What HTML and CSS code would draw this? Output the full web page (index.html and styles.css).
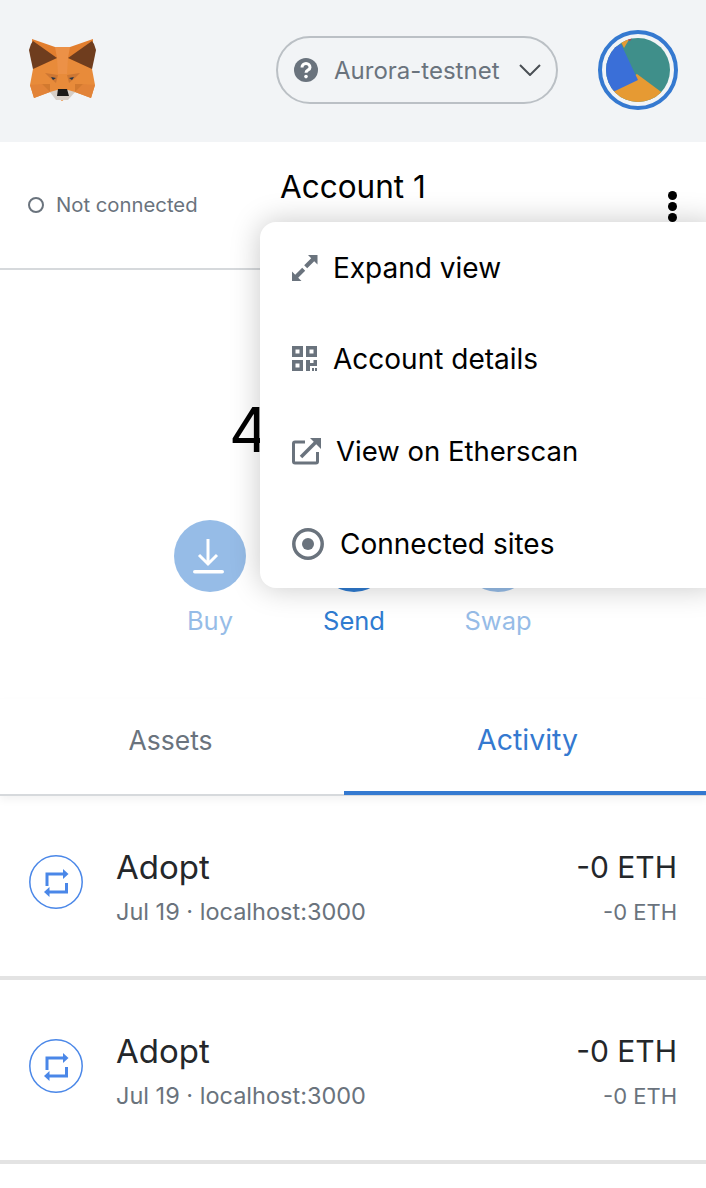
FILE: index.html
```html
<!DOCTYPE html>
<html lang="en">
<head>
<meta charset="utf-8">
<title>MetaMask</title>
<link rel="stylesheet" href="styles.css">
</head>
<body>
<div class="app">
  <header class="topbar">
    <svg class="fox" viewBox="29 39 68 63" aria-hidden="true">
      <polygon fill="#e88b3a" points="33,69 30,85 34,98 50,92 62,101 75,92 91,98 95,85 92,69 70,47 55,47"/>
      <polygon fill="#e27e2e" points="32,39 55,47 70,47 93,39 92,69 68,58 63,64 57,58 33,69"/>
      <polygon fill="#ec9147" points="55,47 70,47 68,58 67,74 58,74 57,58"/>
      <polygon fill="#6f3d1e" points="33,41 57,58 33,69 31,60 29,50 31,44"/>
      <polygon fill="#6f3d1e" points="92,41 68,58 92,69 94,60 96,50 94,44"/>
      <polygon fill="#cd7733" points="45,73 58,75 56,83 50,78"/>
      <polygon fill="#cd7733" points="80,73 67,75 69,83 75,78"/>
      <polygon fill="#e28338" points="30,85 42,84 50,92 34,98"/>
      <polygon fill="#e28338" points="95,85 83,84 75,92 91,98"/>
      <polygon fill="#d2792f" points="42,84 50,84 50,92"/>
      <polygon fill="#d2792f" points="83,84 75,84 75,92"/>
      <polygon fill="#d7cfc7" points="50,92 57,90 68,90 75,92 68,100 56,100"/>
      <polygon fill="#1b1a18" points="58,89 67,89 69,96 57,96"/>
      <polygon fill="#233447" points="51,77 56,78 53,80"/>
      <polygon fill="#233447" points="74,77 69,78 72,80"/>
    </svg>
    <button class="network">
      <svg class="network-q" viewBox="0 0 24 24" aria-hidden="true">
        <circle cx="12" cy="12" r="12" fill="#6a737d"/>
        <path d="M8 9.500a4 4 0 0 1 8 0c0 2.600-4 2.600-4 5.200" fill="none" stroke="#fff" stroke-width="3"/>
        <circle cx="12" cy="18.600" r="1.800" fill="#fff"/>
      </svg>
      <span class="network-name">Aurora-testnet</span>
      <svg class="network-chev" viewBox="0 0 22 12" aria-hidden="true">
        <path d="M1 1l10 10L21 1" fill="none" stroke="#4a4f55" stroke-width="2"/>
      </svg>
    </button>
    <div class="avatar-ring">
      <svg class="avatar" viewBox="606 38 64 64" aria-hidden="true">
        <rect x="606" y="38" width="64" height="64" fill="#3f8f8a"/>
        <polygon fill="#e69a33" points="637,74 664,94 664,104 610,104 612,88"/>
        <polygon fill="#3a6fd8" points="621,44 638,80 615,91 600,95 600,55"/>
        <polygon fill="#e69a33" points="621,42 630,38 624,48"/>
        <polygon fill="#c2334d" points="626,39 632,38 630,41"/>
      </svg>
    </div>
  </header>

  <section class="account-row">
    <div class="status">
      <span class="status-dot"></span>
      <span class="status-text">Not connected</span>
    </div>
    <div class="account-name">Account 1</div>
    <div class="kebab"><i></i><i></i><i></i></div>
  </section>

  <section class="balance">
    <div class="balance-value">4</div>
    <div class="actions">
      <div class="action action-faded">
        <span class="action-circle">
          <svg class="action-icon" viewBox="0 0 32 36" aria-hidden="true">
            <path d="M15 1v24M6 17l9 9 9-9" fill="none" stroke="#fff" stroke-width="3"/>
            <rect x="0" y="32" width="31" height="3.500" rx="1.750" fill="#fff"/>
          </svg>
        </span>
        <span class="action-label">Buy</span>
      </div>
      <div class="action">
        <span class="action-circle"></span>
        <span class="action-label">Send</span>
      </div>
      <div class="action action-faded">
        <span class="action-circle"></span>
        <span class="action-label">Swap</span>
      </div>
    </div>
  </section>

  <nav class="tabs">
    <div class="tab">Assets</div>
    <div class="tab tab-active">Activity</div>
  </nav>

  <ul class="activity">
    <li class="tx">
      <svg class="tx-icon" viewBox="0 0 54 54" aria-hidden="true">
        <circle cx="27" cy="27" r="26.200" fill="none" stroke="#4a87e8" stroke-width="1.500"/>
        <path d="M18 31V19H35" fill="none" stroke="#4a87e8" stroke-width="3"/>
        <path d="M34 14l5.500 5-5.500 5z" fill="#4a87e8"/>
        <path d="M37.500 28v9H20" fill="none" stroke="#4a87e8" stroke-width="3"/>
        <path d="M20.500 32L15 37l5.500 5z" fill="#4a87e8"/>
      </svg>
      <div class="tx-main">
        <div class="tx-title">Adopt</div>
        <div class="tx-sub">Jul 19 · localhost:3000</div>
      </div>
      <div class="tx-amounts">
        <div class="tx-primary">-0 ETH</div>
        <div class="tx-secondary">-0 ETH</div>
      </div>
    </li>
    <li class="tx">
      <svg class="tx-icon" viewBox="0 0 54 54" aria-hidden="true">
        <circle cx="27" cy="27" r="26.200" fill="none" stroke="#4a87e8" stroke-width="1.500"/>
        <path d="M18 31V19H35" fill="none" stroke="#4a87e8" stroke-width="3"/>
        <path d="M34 14l5.500 5-5.500 5z" fill="#4a87e8"/>
        <path d="M37.500 28v9H20" fill="none" stroke="#4a87e8" stroke-width="3"/>
        <path d="M20.500 32L15 37l5.500 5z" fill="#4a87e8"/>
      </svg>
      <div class="tx-main">
        <div class="tx-title">Adopt</div>
        <div class="tx-sub">Jul 19 · localhost:3000</div>
      </div>
      <div class="tx-amounts">
        <div class="tx-primary">-0 ETH</div>
        <div class="tx-secondary">-0 ETH</div>
      </div>
    </li>
  </ul>

  <div class="menu">
    <div class="menu-item">
      <svg class="menu-icon" viewBox="0 0 26 26" aria-hidden="true">
        <path fill="#6a737d" d="M16 0h9.500v9.500l-3.300-3.300-7 7-3-3 7-7zM0 16.500V26h9.500l-3.300-3.300 7-7-3-3-7 7z"/>
      </svg>
      <span class="menu-label">Expand view</span>
    </div>
    <div class="menu-item">
      <svg class="menu-icon" viewBox="0 0 26 26" aria-hidden="true">
        <path fill="#6a737d" fill-rule="evenodd" d="M0 0h11v11H0zM3.500 3.500v4h4v-4zM14 0h11v11H14zM17.500 3.500v4h4v-4zM0 14h11v11H0zM3.500 17.500v4h4v-4zM14 14h4v3h3.500v-3H25v6h-7v5h-4zM20 22h2v3h-2zM23 22h2v3h-2z"/>
      </svg>
      <span class="menu-label">Account details</span>
    </div>
    <div class="menu-item">
      <svg class="menu-icon menu-icon-wide" viewBox="0 0 30 28" aria-hidden="true">
        <path d="M13 5H3a1.500 1.500 0 0 0-1.500 1.500v18A1.500 1.500 0 0 0 3 26h21a1.500 1.500 0 0 0 1.500-1.500V15" fill="none" stroke="#6a737d" stroke-width="3"/>
        <path d="M9 20L25 4" fill="none" stroke="#6a737d" stroke-width="3.500"/>
        <path d="M18 1h11v11z" fill="#6a737d"/>
      </svg>
      <span class="menu-label menu-label-tight">View on Etherscan</span>
    </div>
    <div class="menu-item menu-item-last">
      <svg class="menu-icon menu-icon-ring" viewBox="0 0 32 32" aria-hidden="true">
        <circle cx="16" cy="16" r="14.200" fill="none" stroke="#6a737d" stroke-width="3.500"/>
        <circle cx="16" cy="16" r="6" fill="#6a737d"/>
      </svg>
      <span class="menu-label">Connected sites</span>
    </div>
  </div>
</div>
</body>
</html>
```

FILE: styles.css
```css
* { box-sizing: border-box; }
html, body { margin: 0; padding: 0; background: #fff; }
body { font-family: "Inter", "Liberation Sans", sans-serif; }
.app { position: relative; width: 706px; height: 1188px; overflow: hidden; background: #fff; }

.topbar { height: 142px; background: #f2f4f6; display: flex; align-items: center; padding: 0 28px 2px 29px; }
.fox { width: 68px; height: 63px; display: block; }
.network { margin-left: 179px; width: 282px; height: 68px; border: 2px solid #bbc0c5; border-radius: 34px; background: transparent; display: flex; align-items: center; padding: 0 15px 0 16px; font: inherit; }
.network-q { width: 24px; height: 24px; flex: none; }
.network-name { margin-left: 16px; font-size: 24px; color: #6a737d; white-space: nowrap; flex: 1; text-align: left; }
.network-chev { width: 22px; height: 12px; flex: none; }
.avatar-ring { margin-left: auto; width: 80px; height: 80px; border: 4px solid #3579d0; border-radius: 50%; padding: 4px; }
.avatar { width: 64px; height: 64px; display: block; border-radius: 50%; }

.account-row { position: relative; height: 128px; border-bottom: 2px solid #d6d9dc; }
.status { position: absolute; left: 28px; top: 50px; display: flex; align-items: center; gap: 12px; }
.status-dot { width: 16px; height: 16px; border: 2px solid #6a737d; border-radius: 50%; }
.status-text { font-size: 20.300px; color: #6a737d; line-height: 26px; }
.account-name { position: absolute; left: 280px; top: 24px; font-size: 31.500px; line-height: 42px; color: #000; }
.kebab { position: absolute; left: 668px; top: 49px; display: flex; flex-direction: column; gap: 2px; }
.kebab i { display: block; width: 9px; height: 9px; border-radius: 50%; background: #000; }

.balance { height: 429px; position: relative; }
.balance-value { position: absolute; left: 229px; top: 124px; font-size: 62px; line-height: 72px; color: #000; }
.actions { position: absolute; left: 138px; top: 250px; display: flex; }
.action { width: 144px; display: flex; flex-direction: column; align-items: center; gap: 12px; color: #2f7bd0; }
.action-faded { opacity: .5; }
.action-circle { width: 72px; height: 72px; border-radius: 50%; background: #2f7bd0; display: flex; align-items: center; justify-content: center; }
.action-icon { width: 32px; height: 36px; margin-left: -3px; }
.action-label { font-size: 25.500px; line-height: 34px; }

.tabs { position: absolute; left: 0; top: 699px; width: 706px; height: 97px; display: flex; border-bottom: 2px solid #d6d9dc; box-shadow: 0 4px 8px rgba(0,0,0,.05); background: #fff; }
.tab { flex: 1; display: flex; justify-content: center; padding-top: 22px; font-size: 26.500px; line-height: 38px; color: #6a737d; }
.tab:first-child { flex: 0 0 344px; padding-right: 3px; }
.tab-active { font-size: 28.500px; color: #3479d0; border-bottom: 4px solid #3479d0; margin-bottom: -1px; padding-left: 5px; }

.activity { position: absolute; left: 0; top: 796px; width: 706px; margin: 0; padding: 0; list-style: none; }
.tx { height: 184px; border-bottom: 4px solid #e3e3e3; display: flex; align-items: center; padding: 0 29px; }
.tx-icon { width: 54px; height: 54px; flex: none; margin-bottom: 8px; }
.tx-main { margin-left: 33px; flex: 1; padding-top: 3px; }
.tx-title { font-size: 33px; line-height: 42px; color: #24272a; }
.tx-sub { font-size: 23.500px; line-height: 34px; color: #6a737d; margin-top: 7px; }
.tx-amounts { text-align: right; padding-top: 3px; }
.tx-primary { font-size: 30px; line-height: 42px; color: #24272a; }
.tx-secondary { font-size: 22px; line-height: 34px; color: #6a737d; margin-top: 7px; }

.menu { position: absolute; left: 260px; top: 222px; width: 460px; height: 366px; background: #fff; border-radius: 16px; box-shadow: 0 0 30px rgba(0,0,0,.22); padding: 0 0 0 32px; display: flex; flex-direction: column; }
.menu-item { height: 92px; display: flex; align-items: center; gap: 15px; }
.menu-item-last { padding-top: 3px; }
.menu-icon { width: 26px; height: 26px; flex: none; }
.menu-icon-wide { width: 30px; height: 28px; margin-right: -1px; }
.menu-icon-ring { width: 32px; height: 32px; margin-right: 1px; }
.menu-label { font-size: 28px; color: #000; white-space: nowrap; }
.menu-label-tight { font-size: 27.500px; }
```
